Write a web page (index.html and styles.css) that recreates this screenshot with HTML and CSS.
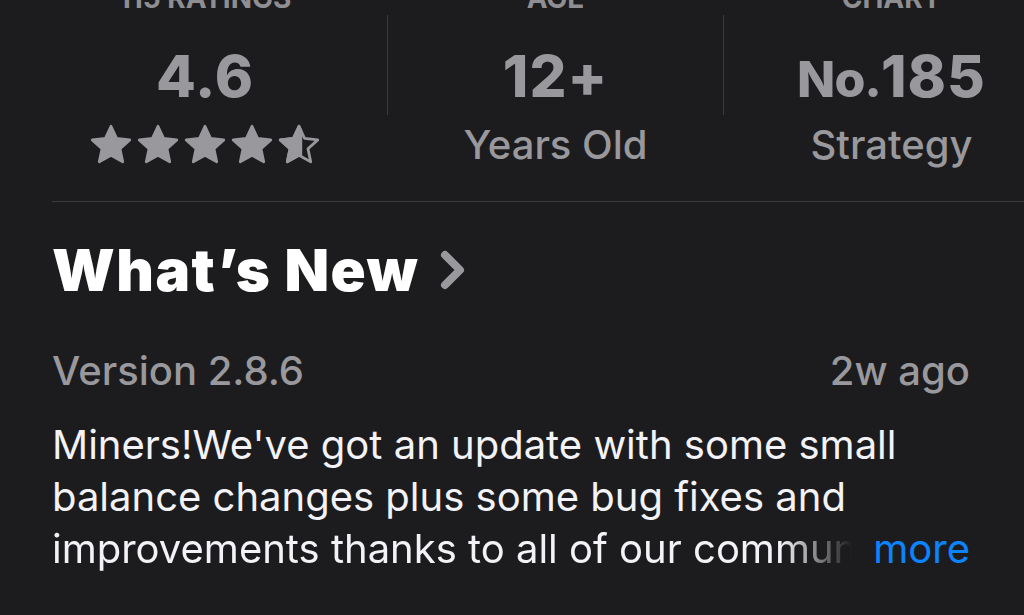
FILE: index.html
```html
<!DOCTYPE html>
<html lang="en">
<head>
    <meta charset="UTF-8">
    <meta name="viewport" content="width=device-width, initial-scale=1.0">
    <title>What's New</title>
    <link rel="stylesheet" href="styles.css">
</head>
<body>
    <div class="page">

        <div class="info-strip">
            <div class="info-item item-ratings">
                <div class="info-label">115 RATINGS</div>
                <div class="info-value">4.6</div>
                <div class="stars">
                    <svg class="star" viewBox="0 0 24 24"><path d="M12 1.8l3.05 6.6 7.2.8-5.35 4.9 1.5 7.1L12 17.6l-6.4 3.6 1.5-7.1L1.75 9.2l7.2-.8z"/></svg>
                    <svg class="star" viewBox="0 0 24 24"><path d="M12 1.8l3.05 6.6 7.2.8-5.35 4.9 1.5 7.1L12 17.6l-6.4 3.6 1.5-7.1L1.75 9.2l7.2-.8z"/></svg>
                    <svg class="star" viewBox="0 0 24 24"><path d="M12 1.8l3.05 6.6 7.2.8-5.35 4.9 1.5 7.1L12 17.6l-6.4 3.6 1.5-7.1L1.75 9.2l7.2-.8z"/></svg>
                    <svg class="star" viewBox="0 0 24 24"><path d="M12 1.8l3.05 6.6 7.2.8-5.35 4.9 1.5 7.1L12 17.6l-6.4 3.6 1.5-7.1L1.75 9.2l7.2-.8z"/></svg>
                    <svg class="star" viewBox="0 0 24 24">
                        <path class="star-outline" d="M12 1.8l3.05 6.6 7.2.8-5.35 4.9 1.5 7.1L12 17.6l-6.4 3.6 1.5-7.1L1.75 9.2l7.2-.8z"/>
                        <path d="M12 1.8l1 2.2v13.6l-1 0-6.4 3.6 1.5-7.1L1.75 9.2l7.2-.8z"/>
                    </svg>
                </div>
            </div>
            <div class="info-sep"></div>
            <div class="info-item">
                <div class="info-label">AGE</div>
                <div class="info-value">12+</div>
                <div class="info-sub">Years Old</div>
            </div>
            <div class="info-sep"></div>
            <div class="info-item">
                <div class="info-label">CHART</div>
                <div class="info-value"><span class="chart-prefix">No.</span>185</div>
                <div class="info-sub">Strategy</div>
            </div>
        </div>

        <div class="rule"></div>

        <section class="whats-new">
            <h2 class="section-title">
                What’s New
                <svg class="chevron" viewBox="0 0 28 40"><path d="M6 5l15 15-15 15"/></svg>
            </h2>
            <div class="version-row">
                <span>Version 2.8.6</span>
                <span>2w ago</span>
            </div>
            <div class="notes">
                <p>Miners!We've got an update with some small</p>
                <p>balance changes plus some bug fixes and</p>
                <p class="last-line"><span class="fade">improvements thanks to all of our commun</span><span class="more">more</span></p>
            </div>
        </section>
    </div>
</body>
</html>
```

FILE: styles.css
```css
body, html {
    margin: 0;
    height: 100%;
    background: #1c1c1e;
    font-family: Inter, "Noto Sans", sans-serif;
    overflow: hidden;
}

.page {
    display: flex;
    flex-direction: column;
}

/* top info strip, scrolled so only the bottom of the labels shows */
.info-strip {
    display: flex;
    margin-top: -19px;
    padding-left: 23px;
    white-space: nowrap;
}

.info-item {
    display: flex;
    flex-direction: column;
    align-items: center;
    width: 335px;
    flex-shrink: 0;
}

.item-ratings {
    width: 364px;
}

.info-label {
    font-size: 28px;
    line-height: 34px;
    font-weight: 700;
    color: #8e8e93;
}

.info-value {
    margin-top: 28px;
    font-size: 58px;
    line-height: 66px;
    font-weight: 800;
    color: #98989d;
    letter-spacing: 1px;
}

.chart-prefix {
    font-size: 50px;
    line-height: 1;
    letter-spacing: -1px;
}

.info-sub {
    margin-top: 12px;
    font-size: 40px;
    line-height: 48px;
    font-weight: 500;
    color: #98989d;
}

.stars {
    display: flex;
    gap: 3px;
    margin-top: 14px;
}

.star {
    width: 44px;
    height: 44px;
}

.star path {
    fill: #98989d;
    stroke: #98989d;
    stroke-width: 1.5;
    stroke-linejoin: round;
}

.star .star-outline {
    fill: none;
}

.info-sep {
    width: 1px;
    height: 100px;
    margin-top: 34px;
    background: #3a3a3c;
    flex-shrink: 0;
}

.rule {
    height: 1px;
    margin-top: 32px;
    margin-left: 52px;
    background: #3a3a3c;
}

.whats-new {
    padding: 0 54px 0 52px;
}

.section-title {
    display: flex;
    align-items: center;
    gap: 20px;
    margin: 35px 0 0;
    font-size: 58px;
    line-height: 66px;
    font-weight: 900;
    color: #ffffff;
    letter-spacing: 1.5px;
}

.chevron {
    width: 28px;
    height: 40px;
    fill: none;
    stroke: #98989d;
    stroke-width: 8;
    stroke-linecap: round;
    stroke-linejoin: round;
}

.version-row {
    display: flex;
    justify-content: space-between;
    margin-top: 44px;
    font-size: 40px;
    line-height: 48px;
    font-weight: 500;
    color: #98989d;
}

.notes {
    margin-top: 24px;
    font-size: 40px;
    line-height: 52px;
    color: #f2f2f7;
}

.notes p {
    margin: 0;
    white-space: nowrap;
}

.last-line {
    display: flex;
}

.fade {
    -webkit-mask-image: linear-gradient(to right, #000 730px, transparent 800px);
    mask-image: linear-gradient(to right, #000 730px, transparent 800px);
}

.more {
    margin-left: auto;
    color: #0a84ff;
}
```
